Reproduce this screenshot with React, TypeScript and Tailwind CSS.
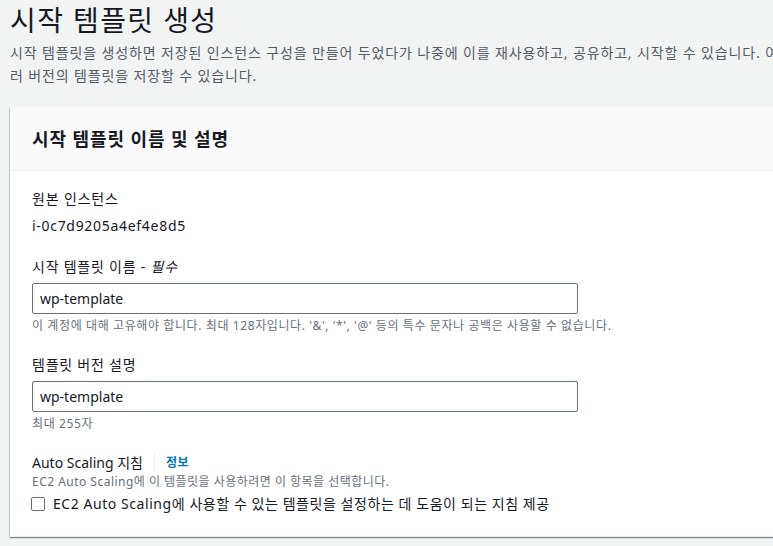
const FONT = "font-['Noto_Sans','Noto_Sans_CJK_KR',sans-serif]";

function Field({
  label,
  required,
  value,
  hint,
}: {
  label: string;
  required?: boolean;
  value: string;
  hint: string;
}) {
  return (
    <div className="flex flex-col">
      <label className="text-[14px] leading-[22px] tracking-[0.055em] text-[#16191f]">
        {label}
        {required && (
          <>
            {" - "}
            <i>필수</i>
          </>
        )}
      </label>
      <input
        readOnly
        value={value}
        className={`mt-[5px] h-[31px] w-[546px] rounded-[2px] border border-[#687078] bg-white px-[7px] text-[14px] text-[#16191f] outline-none ${FONT}`}
      />
      <p className="mt-[4px] text-[12px] leading-[16px] tracking-[0.05em] text-[#687078]">{hint}</p>
    </div>
  );
}

export default function App() {
  return (
    <div className={`h-[546px] w-[773px] overflow-hidden bg-[#f2f3f3] pl-[10px] ${FONT}`}>
      <h1 className="pt-[2px] text-[28px] leading-[36px] tracking-[0.05em] text-[#16191f]">시작 템플릿 생성</h1>
      <p className="mt-[3px] w-[782px] text-[14px] leading-[23px] tracking-[0.062em] text-[#545b64]">
        시작 템플릿을 생성하면 저장된 인스턴스 구성을 만들어 두었다가 나중에 이를 재사용하고, 공유하고, 시작할 수 있습니다. 여러 버전의 템플릿을 저장할 수 있습니다.
      </p>

      <section className="mt-[20px] w-[800px] bg-white shadow-[0_1px_1px_0_rgba(0,28,36,0.3),1px_1px_1px_0_rgba(0,28,36,0.15),-1px_1px_1px_0_rgba(0,28,36,0.15)]">
        <header className="flex h-[64px] items-center border-b border-[#eaeded] bg-[#fafafa] px-[22px]">
          <h2 className="text-[18px] font-bold leading-[22px] tracking-[0.05em] text-[#16191f]">시작 템플릿 이름 및 설명</h2>
        </header>

        <div className="flex flex-col gap-[20px] border-b border-[#eaeded] px-[22px] pt-[17px] pb-[22px]">
          <div className="flex flex-col">
            <span className="text-[14px] leading-[22px] tracking-[0.06em] text-[#16191f]">원본 인스턴스</span>
            <span className="mt-[6px] text-[14px] leading-[20px] tracking-[0.05em] text-[#16191f]">i-0c7d9205a4ef4e8d5</span>
          </div>

          <Field
            label="시작 템플릿 이름"
            required
            value="wp-template"
            hint="이 계정에 대해 고유해야 합니다. 최대 128자입니다. '&', '*', '@' 등의 특수 문자나 공백은 사용할 수 없습니다."
          />

          <Field label="템플릿 버전 설명" value="wp-template" hint="최대 255자" />

          <div className="flex flex-col">
            <div className="flex items-center text-[14px] leading-[22px] text-[#16191f]">
              <span>Auto Scaling 지침</span>
              <span className="mx-[11px] h-[18px] w-px bg-[#eaeded]" />
              <a className="text-[12px] font-bold tracking-[0.05em] text-[#0073bb]">정보</a>
            </div>
            <p className="text-[12px] leading-[16px] tracking-[0.04em] text-[#687078]">
              EC2 Auto Scaling에 이 템플릿을 사용하려면 이 항목을 선택합니다.
            </p>
            <label className="mt-[4px] flex items-center gap-[8px] text-[14px] leading-[20px] tracking-[0.04em] text-[#16191f]">
              <span className="ml-[-1px] h-[14px] w-[14px] shrink-0 rounded-[2px] border border-[#687078] bg-white" />
              EC2 Auto Scaling에 사용할 수 있는 템플릿을 설정하는 데 도움이 되는 지침 제공
            </label>
          </div>
        </div>
      </section>
    </div>
  );
}
